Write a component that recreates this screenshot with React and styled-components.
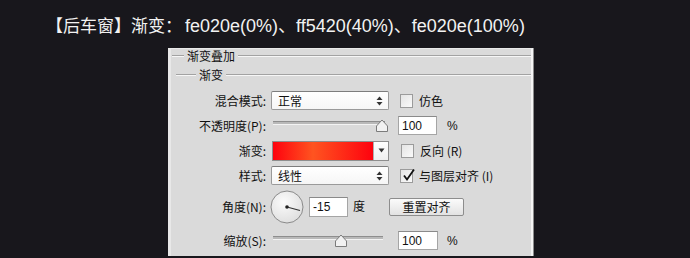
import React from "react";
import styled, { createGlobalStyle } from "styled-components";

const Global = createGlobalStyle`
  html, body { margin: 0; padding: 0; background: #18171c; }
  #root { width: 690px; height: 258px; overflow: hidden; }
`;

const Page = styled.div`
  display: flex;
  flex-direction: column;
  width: 690px;
  height: 258px;
  background: #18171c;
  overflow: hidden;
`;

const Title = styled.div`
  display: flex;
  align-items: baseline;
  padding: 11px 0 0 46px;
  height: 28px;
  line-height: 28px;
  color: #f2f2f2;
  white-space: nowrap;
`;

const TitleCjk = styled.span`
  font-family: "Noto Sans CJK SC", sans-serif;
  font-size: 17px;
  margin-right: 3px;
`;

const TitleCode = styled.span`
  font-family: "Liberation Sans", "Noto Sans CJK SC", sans-serif;
  font-size: 18px;
`;

const Panel = styled.div`
  margin: 9px 0 0 168px;
  width: 360px;
  height: 207px;
  background: #dadada;
  border-top: 1px solid #e9e9e9;
  border-left: 3px solid #e8e8e8;
  border-right: 2px solid #f4f4f4;
  box-shadow: 1px 0 0 #8c8c8c;
  display: flex;
  flex-direction: column;
  font-family: "Noto Sans CJK SC", sans-serif;
  font-size: 12px;
  color: #111;
`;

const GroupHeader = styled.div`
  display: flex;
  align-items: center;
  height: ${(p) => p.$h}px;
  margin-top: ${(p) => p.$mt || 0}px;
  line-height: 1;
`;

const Etch = styled.div`
  height: 0;
  border-top: 1px solid #a2a2a2;
  border-bottom: 1px solid #f6f6f6;
  width: ${(p) => (p.$w ? `${p.$w}px` : "auto")};
  flex: ${(p) => (p.$w ? "0 0 auto" : "1 1 auto")};
  margin-left: ${(p) => p.$ml || 0}px;
`;

const HeaderText = styled.span`
  padding: 0 3px;
  font-size: 12px;
`;

const Rows = styled.div`
  display: flex;
  flex-direction: column;
  margin-top: 7px;
`;

const Row = styled.div`
  display: flex;
  align-items: center;
  height: ${(p) => p.$h}px;
`;

const Label = styled.span`
  flex: 0 0 95px;
  text-align: right;
  white-space: nowrap;
  line-height: 1;
`;

const SelectBox = styled.div`
  box-sizing: border-box;
  margin-left: 5px;
  width: 118px;
  height: 19px;
  display: flex;
  align-items: center;
  justify-content: space-between;
  padding: 0 5px 0 6px;
  background: linear-gradient(#ffffff, #f6f6f6);
  border: 1px solid #9a9a9a;
  border-top-color: #7d7d7d;
  border-radius: 2px;
  line-height: 1;
`;

const CheckWrap = styled.label`
  display: flex;
  align-items: center;
  margin-left: ${(p) => p.$ml}px;
  white-space: nowrap;
  line-height: 1;
`;

const Box = styled.span`
  position: relative;
  box-sizing: border-box;
  width: 13px;
  height: 14px;
  border: 1px solid #9b9b9b;
  background: linear-gradient(135deg, #e4e4e4, #fafafa);
  margin-right: 6px;
  flex: 0 0 auto;
`;

const CheckMark = styled.svg`
  position: absolute;
  left: 1px;
  top: -2px;
`;

const Slider = styled.div`
  position: relative;
  margin-left: 7px;
  width: ${(p) => p.$w}px;
  height: 14px;
`;

const Track = styled.div`
  margin-top: 2px;
  height: 2px;
  background: #b9b9b9;
  border-top: 1px solid #8e8e8e;
  border-bottom: 1px solid #f3f3f3;
`;

const Thumb = styled.svg`
  position: absolute;
  top: 0;
  transform: translateX(-50%);
`;

const NumInput = styled.div`
  box-sizing: border-box;
  margin-left: ${(p) => p.$ml}px;
  width: ${(p) => p.$w || 39}px;
  height: ${(p) => p.$h || 19}px;
  display: flex;
  align-items: center;
  padding-left: 3px;
  background: #fff;
  border: 1px solid #a5a5a5;
  border-top-color: #8a8a8a;
  font-family: "Liberation Sans", sans-serif;
  font-size: 12px;
  line-height: 1;
`;

const Unit = styled.span`
  margin-left: ${(p) => p.$ml}px;
  font-family: "Liberation Sans", "Noto Sans CJK SC", sans-serif;
  font-size: ${(p) => p.$fs || 12}px;
  line-height: 1;
`;

const GradientPicker = styled.div`
  margin-left: 6px;
  display: flex;
  height: 20px;
  border: 1px solid #8e8e8e;
  box-sizing: border-box;
`;

const GradientSwatch = styled.div`
  width: 100px;
  background: linear-gradient(to right, #fe020e 0%, #ff5420 40%, #fe020e 100%);
`;

const DropButton = styled.div`
  width: 14px;
  display: flex;
  align-items: center;
  justify-content: center;
  background: linear-gradient(#ffffff, #efefef);
  border-left: 1px solid #b0b0b0;
`;

const Dial = styled.svg`
  margin-left: 4px;
  flex: 0 0 auto;
`;

const Button = styled.div`
  box-sizing: border-box;
  margin-left: 24px;
  width: 75px;
  height: 18px;
  display: flex;
  align-items: center;
  justify-content: center;
  background: linear-gradient(#fbfbfb, #e2e2e2);
  border: 1px solid #8d8d8d;
  border-radius: 2px;
  line-height: 1;
`;

const UpDown = () => (
  <svg width="7" height="10" viewBox="0 0 7 10">
    <path d="M3.5 0.5 L6.5 4 L0.5 4 Z" fill="#333" />
    <path d="M3.5 9.5 L6.5 6 L0.5 6 Z" fill="#333" />
  </svg>
);

const Select = ({ value }) => (
  <SelectBox>
    <span>{value}</span>
    <UpDown />
  </SelectBox>
);

const Check = ({ ml, checked, children }) => (
  <CheckWrap $ml={ml}>
    <Box>
      {checked && (
        <CheckMark width="14" height="14" viewBox="0 0 14 14">
          <path d="M2 7.5 L5 11.5 L12 1.5" fill="none" stroke="#111" strokeWidth="1.8" />
        </CheckMark>
      )}
    </Box>
    <span>{children}</span>
  </CheckWrap>
);

const SliderCtl = ({ w, pos }) => (
  <Slider $w={w}>
    <Track />
    <Thumb style={{ left: `${pos}%` }} width="13" height="13" viewBox="0 0 13 13">
      <path d="M1 12.5 L1 7 L6.5 1 L12 7 L12 12.5 Z" fill="#f1f1f1" stroke="#7b7b7b" strokeWidth="1" />
    </Thumb>
  </Slider>
);

export default function App() {
  return (
    <Page>
      <Global />
      <Title>
        <TitleCjk>【后车窗】渐变：</TitleCjk>
        <TitleCode>fe020e(0%)、ff5420(40%)、fe020e(100%)</TitleCode>
      </Title>
      <Panel>
        <GroupHeader $h={14}>
          <Etch $w={12} $ml={1} />
          <HeaderText>渐变叠加</HeaderText>
          <Etch />
        </GroupHeader>
        <GroupHeader $h={13} $mt={5}>
          <Etch $w={20} $ml={5} />
          <HeaderText>渐变</HeaderText>
          <Etch />
        </GroupHeader>
        <Rows>
          <Row $h={25}>
            <Label>混合模式:</Label>
            <Select value="正常" />
            <Check ml={11}>仿色</Check>
          </Row>
          <Row $h={25}>
            <Label>不透明度(P):</Label>
            <SliderCtl w={112} pos={97} />
            <NumInput $ml={13} $h={19}>100</NumInput>
            <Unit $ml={10}>%</Unit>
          </Row>
          <Row $h={25}>
            <Label>渐变:</Label>
            <GradientPicker>
              <GradientSwatch />
              <DropButton>
                <svg width="7" height="5" viewBox="0 0 7 5">
                  <path d="M0.5 0.5 L6.5 0.5 L3.5 4.5 Z" fill="#333" />
                </svg>
              </DropButton>
            </GradientPicker>
            <Check ml={12}>反向 (R)</Check>
          </Row>
          <Row $h={25}>
            <Label>样式:</Label>
            <Select value="线性" />
            <Check ml={11} checked>
              与图层对齐 (I)
            </Check>
          </Row>
          <Row $h={37}>
            <Label>角度(N):</Label>
            <Dial width="34" height="34" viewBox="0 0 34 34">
              <defs>
                <radialGradient id="dialFill" cx="40%" cy="35%" r="70%">
                  <stop offset="0%" stopColor="#fbfbfb" />
                  <stop offset="100%" stopColor="#dedede" />
                </radialGradient>
              </defs>
              <circle cx="17" cy="17" r="16" fill="url(#dialFill)" stroke="#8a8a8a" strokeWidth="1" />
              <line x1="17" y1="17" x2="30" y2="20.5" stroke="#333" strokeWidth="1.2" />
              <circle cx="17" cy="17" r="1.8" fill="#222" />
            </Dial>
            <NumInput $ml={5} $h={20}>-15</NumInput>
            <Unit $ml={5} $fs={12}>
              <span style={{ fontFamily: '"Noto Sans CJK SC", sans-serif' }}>度</span>
            </Unit>
            <Button>重置对齐</Button>
          </Row>
          <Row $h={31}>
            <Label>缩放(S):</Label>
            <SliderCtl w={110} pos={62} />
            <NumInput $ml={15} $w={40} $h={19}>100</NumInput>
            <Unit $ml={9}>%</Unit>
          </Row>
        </Rows>
      </Panel>
    </Page>
  );
}
